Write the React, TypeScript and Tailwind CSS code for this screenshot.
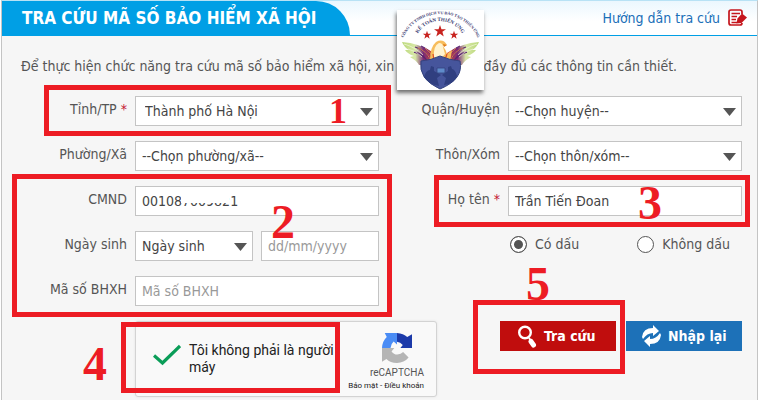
import React, { useState } from "react";

const control =
  "block h-[30px] w-full rounded-none border border-[#c4c4c4] bg-white text-[14px] text-[#444] outline-none placeholder:text-[#999]";

function Field({ id, label, required, children }: { id: string; label: string; required?: boolean; children: React.ReactNode }) {
  return (
    <>
      <label htmlFor={id} className="self-center pb-1 text-right leading-5 whitespace-nowrap">
        {label}
        {required && <span className="text-[#c4122f]"> *</span>}
      </label>
      <div className="relative flex gap-2">{children}</div>
    </>
  );
}

function Dropdown({ id, options, chosen }: { id: string; options: string[]; chosen?: boolean }) {
  return (
    <div className="relative min-w-0 flex-1">
      <select id={id} className={control + " appearance-none " + (chosen ? "pl-[9px]" : "pl-[6px]")}>
        {options.map((o) => (
          <option key={o}>{o}</option>
        ))}
      </select>
      <svg className="pointer-events-none absolute top-3 right-[6px] h-2 w-[13px]" viewBox="0 0 13 8">
        <path d="M0 0h13L6.500 8z" fill="#555" />
      </svg>
    </div>
  );
}

function Digit({ children, className }: { children: string; className: string }) {
  return (
    <span
      className={
        "pointer-events-none absolute font-['Liberation_Serif',serif] font-bold leading-none text-[#ed1c24] " + className
      }
    >
      {children}
    </span>
  );
}

function Frame({ className, children }: { className: string; children?: React.ReactNode }) {
  return <div className={"pointer-events-none absolute border-5 border-[#ed1c24] " + className}>{children}</div>;
}

function Emblem() {
  const star = "M0-5 1.200-1.500H5L2 .7 3.100 4.500 0 2.200-3.100 4.500-2 .7-5-1.500H-1.200z";
  return (
    <svg
      className="absolute top-[10px] left-[397px] h-[80px] w-[87px] bg-white shadow-[-1px_3px_4px_rgba(0,0,0,0.55)]"
      viewBox="0 0 87 80"
      fontFamily="Liberation Serif, serif"
      fontWeight="bold"
      fill="#34346c"
      textAnchor="middle"
    >
      <defs>
        <path id="outer" d="M4 34A41 41 0 0 1 83 34" />
        <path id="inner" d="M19 27A26 26 0 0 1 67 27" />
        <linearGradient id="wing" x1="0" x2="1">
          <stop offset="0" stopColor="#b9d878" />
          <stop offset=".4" stopColor="#d8e8a8" />
          <stop offset=".65" stopColor="#7a2a78" />
          <stop offset="1" stopColor="#e8502a" />
        </linearGradient>
      </defs>
      <text fontSize="4">
        <textPath href="#outer" startOffset="50%">
          CÔNG TY TNHH DỊCH VỤ ĐÀO TẠO THIÊN ỨNG
        </textPath>
      </text>
      <text fontSize="5">
        <textPath href="#inner" startOffset="50%">
          KẾ TOÁN THIÊN ỨNG
        </textPath>
      </text>
      <g fill="#c8231f">
        <path d={star} transform="translate(30 25) scale(.85)" />
        <path d={star} transform="translate(43 21) scale(1.200)" />
        <path d={star} transform="translate(57 25) scale(.85)" />
      </g>
      {[false, true].map((flip) => (
        <g key={String(flip)} transform={flip ? "translate(87 0) scale(-1 1)" : undefined}>
          <path d="M5 32Q22 33 37 43L38 55H22Q20 51 13 47L17 46Q11 44 8 40L12 40Q7 37 5 32z" fill="url(#wing)" />
          <path d="M18 37q10 3 15 12M17 42q9 2 13 9M24 36q8 3 11 12" fill="none" stroke="#5b2470" strokeWidth="1.300" />
          <path d="M7 34q11 3 19 11M11 39q9 2 14 8" fill="none" stroke="#f2f7dc" strokeWidth=".7" />
          <path d="M21 38q8 3 12 11M28 38q6 4 8 11" fill="none" stroke="#f08a4a" strokeWidth=".8" />
        </g>
      ))}
      <path d="M33 50Q33 37 39 32Q46 28 50 35L46 36Q49 40 50 44L55 40 53 52H35z" fill="#f7bd5c" />
      <path d="M37 47q-1-11 5-14q4 0 4 4l2 7-5 6z" fill="#fff3d0" />
      <path d="M36 44l1 6M50 44l-2 6" stroke="#d94a26" strokeWidth="1.200" />
      <path d="M46 34l4 1-3 2z" fill="#e07a1c" />
      <path d="M24 51Q35 50 43 46Q52 50 63 51Q67 69 43 79Q21 69 24 51z" fill="#46559c" stroke="#34437e" />
      <path d="M27 67q2-7 6-7l1-4 3 1v4l7 4-4 3 2 8Q31 74 27 67zM60 66q-2-7-5-7l-1-3-3 1v4l-6 4 4 3-2 7Q57 74 60 66z" fill="#303f80" />
      <path d="M40 58h8v5h-8z" fill="#5f8bcb" stroke="#34437e" strokeWidth=".8" />
    </svg>
  );
}

export default function App() {
  const [accent, setAccent] = useState("yes");
  return (
    <main className="relative min-h-screen bg-white pl-px font-['DejaVu_Sans_Condensed','Noto_Sans',sans-serif] text-[14px] text-[#555]">
      <section className="min-h-screen border-t border-r border-l border-t-[#b8e2f5] border-r-[#c4c4c4] border-l-[#c4c4c4] bg-[#f6f6f6]">
        <header className="bg-[#009fe5] pb-px">
          <div className="flex h-[34px] items-stretch justify-between bg-linear-to-b from-[#ebf7fe] to-white to-60%">
            <h1 className="w-[348px] rounded-tr-[34px] bg-[#009fe5] pl-5 text-[17px] leading-[34px] font-bold whitespace-nowrap text-white">
              TRA CỨU MÃ SỐ BẢO HIỂM XÃ HỘI
            </h1>
            <a href="#guide" className="flex items-center gap-2 pr-[9px] text-[#1b6fb8]">
              Hướng dẫn tra cứu
              <svg className="h-[18px] w-5" viewBox="0 0 20 18" fill="none" stroke="#c5161d">
                <path d="M14 5V3Q14 1 12 1H3Q1 1 1 3V14Q1 16 3 16H12Q14 16 14 14" strokeWidth="1.700" />
                <path d="M3.500 4.500H12M3.500 7.500H9M3.500 10.500H8M3.500 13.500H9" strokeWidth="1.500" />
                <path d="M14 4.500L19 8.500 13.500 14 8.500 14.500 9.500 9.500z" fill="#c5161d" stroke="none" />
              </svg>
            </a>
          </div>
        </header>

        <p className="mx-[19px] my-5 leading-5 whitespace-nowrap">
          Để thực hiện chức năng tra cứu mã số bảo hiểm xã hội, xin vui lòng điền đầy đủ các thông tin cần thiết.
        </p>

        <form onSubmit={(e) => e.preventDefault()}>
          <div className="relative grid grid-cols-[125px_minmax(0,244fr)_113px_minmax(0,234fr)] grid-rows-[repeat(5,30px)] gap-x-2 gap-y-[15px] pr-[15px]">
            <Field id="province" label="Tỉnh/TP" required>
              <Dropdown id="province" options={["Thành phố Hà Nội"]} chosen />
            </Field>
            <Field id="district" label="Quận/Huyện">
              <Dropdown id="district" options={["--Chọn huyện--"]} />
            </Field>
            <Field id="ward" label="Phường/Xã">
              <Dropdown id="ward" options={["--Chọn phường/xã--"]} />
            </Field>
            <Field id="hamlet" label="Thôn/Xóm">
              <Dropdown id="hamlet" options={["--Chọn thôn/xóm--"]} />
            </Field>
            <Field id="idcard" label="CMND">
              <input id="idcard" className={control + " pl-[6px]"} defaultValue="001087009821" />
              <span className="absolute top-[6px] left-[46px] h-[11px] w-12 bg-white" />
            </Field>
            <Field id="fullname" label="Họ tên" required>
              <input id="fullname" className={control + " pl-[6px]"} defaultValue="Trần Tiến Đoan" />
            </Field>
            <Field id="birthtype" label="Ngày sinh">
              <Dropdown id="birthtype" options={["Ngày sinh"]} />
              <div className="min-w-0 flex-1">
                <input aria-label="Ngày sinh" className={control + " pl-[6px]"} placeholder="dd/mm/yyyy" />
              </div>
            </Field>
            <div className="col-start-4 flex items-center justify-between pr-3 pb-1 pl-[2px]">
              {[
                ["yes", "Có dấu"],
                ["no", "Không dấu"],
              ].map(([value, text]) => (
                <label key={value} className="flex items-center gap-2">
                  <input
                    type="radio"
                    name="accent"
                    checked={accent === value}
                    onChange={() => setAccent(value)}
                    className="size-[17px] appearance-none rounded-full border border-[#555] bg-white checked:bg-[#555] checked:shadow-[inset_0_0_0_3px_white]"
                  />
                  {text}
                </label>
              ))}
            </div>
            <Field id="bhxh" label="Mã số BHXH">
              <input id="bhxh" className={control + " pl-[6px]"} placeholder="Mã số BHXH" />
            </Field>

            <Frame className="-top-[11px] -right-3 -bottom-[10px] left-[42px] col-start-1 col-end-3 row-start-1 row-end-2">
              <Digit className="top-[3px] right-[39px] text-[36px]">1</Digit>
            </Frame>
            <Frame className="-top-3 -right-[13px] -bottom-[11px] left-[10px] col-start-1 col-end-3 row-start-3 row-end-6">
              <Digit className="top-[19px] right-[92px] text-[48px]">2</Digit>
            </Frame>
            <Frame className="-top-[11px] -right-2 -bottom-[11px] left-[47px] col-start-3 col-end-5 row-start-3 row-end-4">
              <Digit className="-top-px right-[83px] text-[48px]">3</Digit>
            </Frame>
          </div>

          <div className="mt-[15px] flex items-start justify-between pr-[15px] pl-[133px]">
            <div className="relative flex h-[76px] w-[302px] rounded-[3px] border border-[#d3d3d3] bg-[#f9f9f9] pl-[17px] font-['Roboto',sans-serif] text-[#222] shadow-[0_0_3px_rgba(0,0,0,0.08)]">
              <svg className="mt-[22px] h-[22px] w-7" viewBox="0 0 28 22">
                <path d="M1 11.500L9.500 19 27 2" fill="none" stroke="#0a9d58" strokeWidth="3.200" />
              </svg>
              <p className="mt-5 ml-2 w-[150px] text-[14px] leading-[17px]">Tôi không phải là người máy</p>
              <div className="mt-[11px] ml-auto flex flex-col items-end pr-3 text-[#555]">
                <svg className="mr-3 h-[30px] w-[30px]" viewBox="0 0 88 88">
                  <path d="M0 44Q1 24 14 12L8 0H44V34L34 25Q26 32 25 44Z" fill="#4a8cf5" />
                  <path d="M44 0Q63 1 74 12L88 4V44H54L61 35Q54 27 44 26Z" fill="#1c3aa9" />
                  <path d="M0 44H36L28 54Q34 63 45 63Q56 63 62 56L78 72Q65 88 44 88Q24 87 13 76L0 84Z" fill="#b5b5b5" />
                </svg>
                <span className="mt-1 text-[10px] leading-3">reCAPTCHA</span>
                <span className="mt-px flex gap-[2px] text-[8px] leading-3 whitespace-nowrap text-[#222]">
                  <a href="#privacy">Bảo mật</a>-<a href="#terms">Điều khoản</a>
                </span>
              </div>
              <Frame className="top-0 right-24 bottom-[3px] -left-[15px]">
                <Digit className="top-[13px] -left-[43px] text-[48px]">4</Digit>
              </Frame>
            </div>

            <div className="flex gap-[10px] font-bold text-white">
              <div className="relative">
                <button type="submit" className="flex h-[30px] w-[116px] items-center bg-[#c00d0d] pl-[18px]">
                  <svg className="h-[23px] w-[19px]" viewBox="0 0 19 23" fill="none" stroke="white">
                    <circle cx="7" cy="7.500" r="5.800" strokeWidth="2.400" />
                    <path d="M11 13L12.500 15" strokeWidth="2" />
                    <path d="M13 16.500L15.500 20" strokeWidth="5" strokeLinecap="round" />
                  </svg>
                  <span className="ml-[7px]">Tra cứu</span>
                </button>
                <Frame className="-top-[21px] -right-[9px] -bottom-[23px] -left-[27px]">
                  <Digit className="-top-[45px] left-12 text-[48px]">5</Digit>
                </Frame>
              </div>
              <button type="reset" className="flex h-[30px] w-[116px] items-center bg-[#1d71b8] pl-4">
                <svg className="h-[22px] w-[19px]" viewBox="0 0 19 22" fill="white">
                  <path d="M0 12Q1 3 11 3V0L17 6 11 11V8Q5 8 1 14Z" />
                  <path d="M19 10Q18 19 8 19V22L2 16 8 11V14Q14 14 18 8Z" />
                </svg>
                <span className="ml-[7px] whitespace-nowrap">Nhập lại</span>
              </button>
            </div>
          </div>
        </form>
      </section>
      <Emblem />
    </main>
  );
}
